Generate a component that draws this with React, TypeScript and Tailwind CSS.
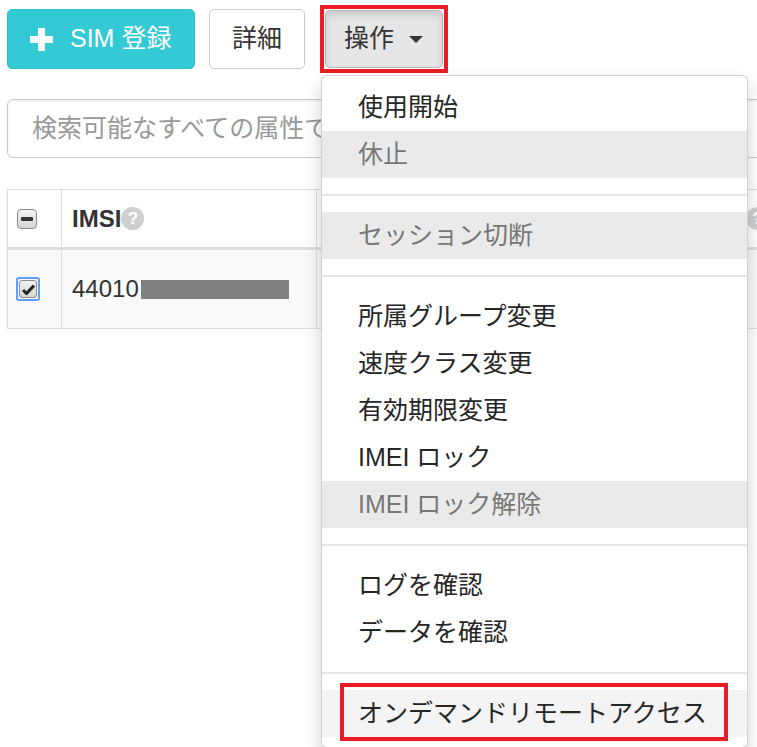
type MenuEntry =
  | { kind: 'item'; label: string; disabled?: boolean; hover?: boolean; marked?: boolean }
  | { kind: 'divider' };

const menu: MenuEntry[] = [
  { kind: 'item', label: '使用開始' },
  { kind: 'item', label: '休止', disabled: true },
  { kind: 'divider' },
  { kind: 'item', label: 'セッション切断', disabled: true },
  { kind: 'divider' },
  { kind: 'item', label: '所属グループ変更' },
  { kind: 'item', label: '速度クラス変更' },
  { kind: 'item', label: '有効期限変更' },
  { kind: 'item', label: 'IMEI ロック' },
  { kind: 'item', label: 'IMEI ロック解除', disabled: true },
  { kind: 'divider' },
  { kind: 'item', label: 'ログを確認' },
  { kind: 'item', label: 'データを確認' },
  { kind: 'divider' },
  { kind: 'item', label: 'オンデマンドリモートアクセス', hover: true, marked: true },
];

const HelpIcon = () => (
  <span className="inline-flex h-[23px] w-[23px] items-center justify-center rounded-full bg-[#cfcfcf] text-[17px] font-bold leading-none text-white">
    ?
  </span>
);

/**
 * SIM 一覧 - 操作メニューを開いた状態
 */
const App = () => {
  return (
    <div className="relative h-[747px] w-[757px] overflow-hidden bg-white font-['Liberation_Sans','Noto_Sans_CJK_JP',sans-serif] text-[#333]">
      {/* ボタン列 */}
      <div className="flex h-[73px] items-center pl-[7px] pt-[5px]">
        <button className="flex h-[60px] w-[188px] items-center rounded-[5px] border border-[#2fbfca] bg-[#34cad5] pl-[22px] text-[25px] text-white">
          <svg width="23" height="23" viewBox="0 0 23 23" className="mr-[17px]">
            <rect x="8" y="0" width="7" height="23" fill="#fff" />
            <rect x="0" y="8" width="23" height="7" fill="#fff" />
          </svg>
          SIM 登録
        </button>
        <button className="ml-[14px] h-[60px] w-[96px] rounded-[5px] border border-[#ccc] bg-white text-[25px]">
          詳細
        </button>
        <div className="ml-[15px] border-4 border-[#ed1c24] p-px">
          <button className="flex h-[58px] w-[118px] items-center rounded-[5px] border border-[#b5b5b5] bg-[#e6e6e6] pl-[18px] text-[25px] shadow-[inset_0_4px_7px_rgba(0,0,0,0.12)]">
            操作
            <svg width="14" height="7" viewBox="0 0 14 7" className="ml-[15px]">
              <path d="M0 0 L14 0 L7 7 Z" fill="#333" />
            </svg>
          </button>
        </div>
      </div>

      {/* 検索 */}
      <input
        className="ml-[7px] mt-[26px] block h-[59px] w-[800px] rounded-[6px] border border-[#ccc] pl-[24px] text-[25px] shadow-[inset_0_1px_2px_rgba(0,0,0,0.08)] outline-none placeholder:text-[#999]"
        placeholder="検索可能なすべての属性で検索"
      />

      {/* テーブル */}
      <div className="ml-[7px] mt-[31px] w-[820px] border border-[#ddd]">
        <div className="flex h-[60px] border-b-[3px] border-[#ddd] bg-white">
          <div className="flex w-[54px] items-center border-r border-[#ddd] pl-[9px]">
            <span className="flex h-[20px] w-[20px] items-center justify-center rounded-[4px] border border-[#8c8c8c] bg-gradient-to-b from-[#f2f2f2] to-[#d6d6d6]">
              <span className="h-[4px] w-[12px] rounded-[1px] bg-[#333]" />
            </span>
          </div>
          <div className="flex w-[255px] items-center border-r border-[#ddd] pl-[10px]">
            <span className="text-[24px] font-bold">IMSI</span>
            <HelpIcon />
          </div>
          <div className="flex flex-1 items-center justify-end pr-[57px]">
            <HelpIcon />
          </div>
        </div>
        <div className="flex h-[78px] bg-[#f9f9f9]">
          <div className="flex w-[54px] items-center border-r border-[#ddd] pl-[8px]">
            <span className="flex h-[24px] w-[24px] items-center justify-center rounded-[3px] border-2 border-[#5e9ef6]">
              <span className="flex h-[18px] w-[18px] items-center justify-center rounded-[3px] border border-[#8c8c8c] bg-gradient-to-b from-[#f2f2f2] to-[#d6d6d6]">
                <svg width="13" height="11" viewBox="0 0 13 11">
                  <path d="M1 6 L4.5 9.5 L12 1.5" stroke="#222" strokeWidth="3" fill="none" />
                </svg>
              </span>
            </span>
          </div>
          <div className="flex w-[255px] items-center border-r border-[#ddd] pl-[10px]">
            <span className="text-[24px]">44010</span>
            <span className="ml-[2px] h-[19px] w-[148px] bg-[#808080]" />
          </div>
          <div className="flex-1" />
        </div>
      </div>

      {/* 操作メニュー */}
      <div className="absolute left-[321px] top-[75px] w-[427px] rounded-[6px] border border-[rgba(0,0,0,0.18)] bg-white pt-[8px] pb-[10px] shadow-[0_9px_18px_rgba(0,0,0,0.18)]">
        {menu.map((entry, index) =>
          entry.kind === 'divider' ? (
            <div key={index} className="my-[16px] h-[2px] bg-[#e5e5e5]" />
          ) : (
            <div
              key={index}
              className={`relative flex h-[47px] items-center pl-[36px] text-[25px] ${
                entry.disabled
                  ? 'bg-[#eaeaea] text-[#777]'
                  : entry.hover
                    ? 'bg-[#f4f4f4] text-[#262626]'
                    : 'text-[#262626]'
              }`}
            >
              {entry.label}
              {entry.marked && (
                <span className="absolute -top-[7px] left-[18px] h-[58px] w-[388px] border-4 border-[#ed1c24]" />
              )}
            </div>
          )
        )}
      </div>
    </div>
  );
};

export default App;
